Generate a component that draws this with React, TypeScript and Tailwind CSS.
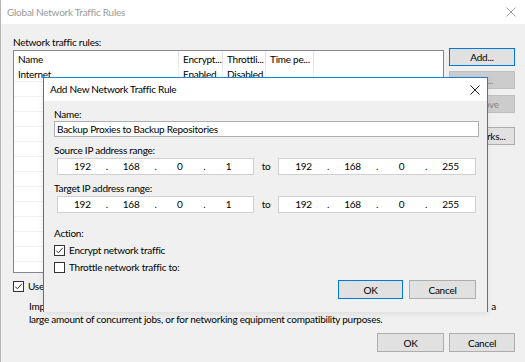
import React from 'react';

const font = { fontFamily: 'Lato, "Noto Sans", sans-serif' };

function Btn({ label, def, disabled, className = '' }: { label: string; def?: boolean; disabled?: boolean; className?: string }) {
  return (
    <div
      className={`flex items-center justify-center leading-none shrink-0 ${
        disabled
          ? 'bg-[#cccccc] border border-[#bfbfbf] text-[#8a8a8a]'
          : def
          ? 'bg-[#e1e1e1] border border-[#0078d7] text-black'
          : 'bg-[#e1e1e1] border border-[#adadad] text-black'
      } ${className}`}
    >
      {label}
    </div>
  );
}

function Check({ checked }: { checked?: boolean }) {
  return (
    <div className="w-[11px] h-[11px] border border-[#333] bg-white flex items-center justify-center shrink-0">
      {checked && (
        <svg width="9" height="9" viewBox="0 0 9 9">
          <path d="M1.2 4.6 L3.4 6.8 L7.8 1.8" fill="none" stroke="#333" strokeWidth="1" />
        </svg>
      )}
    </div>
  );
}

function IpBox({ parts, w }: { parts: string[]; w: string }) {
  return (
    <div className={`flex items-center h-[17px] ${w} bg-white border border-[#d0d0d0] px-[6px]`}>
      {parts.map((p, i) => (
        <React.Fragment key={i}>
          {i > 0 && <span className="w-[12px] text-center">.</span>}
          <span className="w-[37px] text-center">{p}</span>
        </React.Fragment>
      ))}
    </div>
  );
}

function CloseX({ color }: { color: string }) {
  return (
    <svg width="10" height="10" viewBox="0 0 10 10">
      <path d="M0.5 0.5 L9.5 9.5 M9.5 0.5 L0.5 9.5" stroke={color} strokeWidth="1" />
    </svg>
  );
}

export default function App() {
  const cols = [
    { name: 'Name', w: 'w-[165px]' },
    { name: 'Encrypt...', w: 'w-[44px]' },
    { name: 'Throttli...', w: 'w-[43px]' },
    { name: 'Time pe...', w: 'w-[48px]' },
  ];
  const rows = Array.from({ length: 13 });
  return (
    <div
      className="relative w-[525px] h-[362px] overflow-hidden bg-[#f0f0f0] border-l border-[#b5b5b5] text-black text-[10px] tracking-[-0.25px]"
      style={font}
    >
      {/* Outer window title */}
      <div className="h-[24px] bg-white flex items-center justify-between pl-[6px] pr-[9px]">
        <span className="text-[#999999]">Global Network Traffic Rules</span>
        <CloseX color="#a0a0a0" />
      </div>

      <div className="pl-[12px] pr-[10px] pt-[12px]">
        <div className="leading-[12px]">Network traffic rules:</div>
        <div className="flex items-start gap-[5px]">
          {/* List view */}
          <div className="mt-[2px] w-[431px] h-[223px] bg-white border border-[#828790] overflow-hidden">
            <div className="flex h-[16px] leading-[16px]">
              {cols.map((c) => (
                <div key={c.name} className={`${c.w} pl-[4px] border-r border-[#e5e5e5] whitespace-nowrap overflow-hidden`}>
                  {c.name}
                </div>
              ))}
            </div>
            <div className="flex h-[15px] leading-[15px] border-b border-[#f3f3f3]">
              <div className="w-[165px] pl-[4px] border-r border-[#f0f0f0]">Internet</div>
              <div className="w-[44px] pl-[4px] border-r border-[#f0f0f0]">Enabled</div>
              <div className="w-[43px] pl-[4px] border-r border-[#f0f0f0] overflow-hidden whitespace-nowrap">Disabled</div>
              <div className="w-[48px] border-r border-[#f0f0f0]" />
            </div>
            {rows.map((_, i) => (
              <div key={i} className="h-[15px] border-b border-[#f3f3f3]" />
            ))}
          </div>

          {/* Side buttons */}
          <div className="flex flex-col w-[66px]">
            <Btn label="Add..." def className="h-[18px]" />
            <Btn label="Edit..." disabled className="h-[18px] mt-[5px]" />
            <Btn label="Remove" disabled className="h-[18px] mt-[6px]" />
            <Btn label="Networks..." className="h-[18px] mt-[14px]" />
          </div>
        </div>

        <div className="flex items-center h-[13px] gap-[4px] mt-[7px]">
          <Check checked />
          <span>Use multiple upload streams per job:</span>
        </div>
        <div className="ml-[16px] mt-[7px] leading-[13px]">
          <div className="flex justify-between w-[467px]">
            <span>Important: reduce the amount of upload streams if you have a very slow link,</span>
            <span>a</span>
          </div>
          <div>large amount of concurrent jobs, or for networking equipment compatibility purposes.</div>
        </div>

        <div className="flex justify-end gap-[5px] mt-[7px]">
          <Btn label="OK" className="w-[67px] h-[19px]" />
          <Btn label="Cancel" className="w-[66px] h-[19px]" />
        </div>
      </div>

      {/* Add New Network Traffic Rule dialog */}
      <div className="absolute left-[42px] top-[77px] w-[445px] h-[235px] bg-[#f0f0f0] border border-[#1883d7] border-b-0 shadow-[0_2px_6px_rgba(0,0,0,0.08)]">
        <div className="h-[23px] bg-white flex items-center justify-between pl-[6px] pr-[7px]">
          <span>Add New Network Traffic Rule</span>
          <CloseX color="#222" />
        </div>
        <div className="pl-[10px] pt-[7px]">
          <div className="leading-[12px]">Name:</div>
          <div className="mt-[1px] w-[425px] h-[16px] bg-white border border-[#b0b0b0] flex items-center px-[2px] leading-none">
            Backup Proxies to Backup Repositories
          </div>

          <div className="mt-[7px] leading-[12px]">Source IP address range:</div>
          <div className="flex items-center mt-[2px] ml-[3px]">
            <IpBox parts={['192', '168', '0', '1']} w="w-[197px]" />
            <span className="w-[24px] text-center">to</span>
            <IpBox parts={['192', '168', '0', '255']} w="w-[198px]" />
          </div>

          <div className="mt-[7px] leading-[12px]">Target IP address range:</div>
          <div className="flex items-center mt-[2px] ml-[3px]">
            <IpBox parts={['192', '168', '0', '1']} w="w-[197px]" />
            <span className="w-[24px] text-center">to</span>
            <IpBox parts={['192', '168', '0', '255']} w="w-[198px]" />
          </div>

          <div className="mt-[14px] leading-[12px]">Action:</div>
          <div className="flex items-center h-[13px] gap-[4px] mt-[5px]">
            <Check checked />
            <span>Encrypt network traffic</span>
          </div>
          <div className="flex items-center h-[13px] gap-[4px] mt-[4px]">
            <Check />
            <span>Throttle network traffic to:</span>
          </div>

          <div className="flex gap-[6px] mt-[6px] ml-[284px]">
            <Btn label="OK" def className="w-[65px] h-[19px]" />
            <Btn label="Cancel" className="w-[67px] h-[19px]" />
          </div>
        </div>
      </div>
    </div>
  );
}
